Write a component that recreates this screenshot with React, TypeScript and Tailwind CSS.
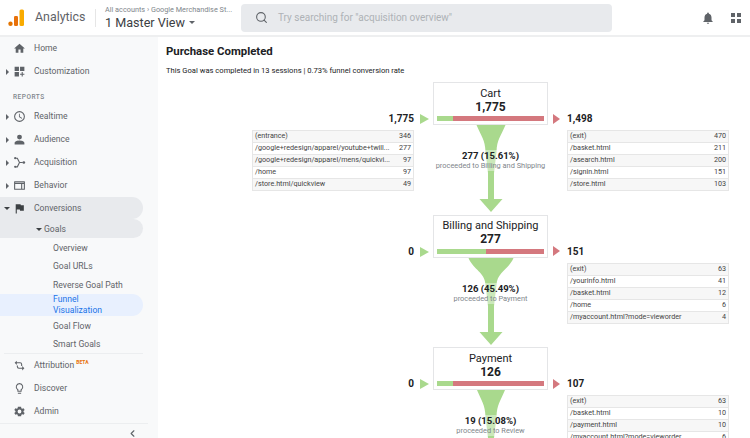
import React from "react";
import { Search, ChevronLeft } from "lucide-react";

const P = ({ d, fill = "#5f6368" }: { d: string; fill?: string }) => (
  <svg width="13" height="13" viewBox="0 0 24 24" fill={fill} className="shrink-0"><path d={d} /></svg>
);

const AcqIcon = () => (
  <svg width="13" height="13" viewBox="0 0 24 24" fill="none" stroke="#5f6368" strokeWidth="2" className="shrink-0">
    <path d="M5 4h3l4 8-4 8H5M12 12h6" />
    <circle cx="4" cy="4" r="2" fill="#5f6368" stroke="none" />
    <circle cx="4" cy="20" r="2" fill="#5f6368" stroke="none" />
    <circle cx="20" cy="12" r="2.5" fill="#5f6368" stroke="none" />
  </svg>
);

const icons: Record<string, string> = {
  home: "M10 20v-6h4v6h5v-8h3L12 3 2 12h3v8z",
  custom: "M3 3h8v8H3zM13 3h8v8h-8zM3 13h8v8H3zM16 13h2v3h3v2h-3v3h-2v-3h-3v-2h3z",
  clock: "M12 2a10 10 0 1 0 0 20 10 10 0 0 0 0-20zm0 18a8 8 0 1 1 0-16 8 8 0 0 1 0 16zm.5-13H11v6l5.2 3.2.8-1.3-4.5-2.7z",
  person: "M12 12a4.5 4.5 0 1 0 0-9 4.5 4.5 0 0 0 0 9zm0 2c-3 0-9 1.5-9 4.5V21h18v-2.5c0-3-6-4.5-9-4.5z",
  behavior: "M3 4h18a1 1 0 0 1 1 1v14a1 1 0 0 1-1 1H3a1 1 0 0 1-1-1V5a1 1 0 0 1 1-1zm1 5v9h11V9zm13 0v9h3V9zM4 6v1h16V6z",
  flag: "M5 4h9l.4 2H20v10h-7l-.4-2H7v7H5z",
  attribution: "M7 3 3 7l4 4V8h6a2 2 0 0 1 2 2v3h2v-3a4 4 0 0 0-4-4H7zM17 13l4 4-4 4v-3h-6a4 4 0 0 1-4-4v-2h2v2a2 2 0 0 0 2 2h6z",
  bulb: "M9 21.5h6V20H9zM12 2a7 7 0 0 0-4 12.7V17a1 1 0 0 0 1 1h6a1 1 0 0 0 1-1v-2.3A7 7 0 0 0 12 2zm2.5 11.5-.5.4V16h-4v-2.1l-.5-.4a5 5 0 1 1 5 0z",
  gear: "M19.4 13a7.5 7.5 0 0 0 0-2l2.1-1.6-2-3.5-2.5 1a7.5 7.5 0 0 0-1.7-1L15 3.3H9l-.4 2.6a7.5 7.5 0 0 0-1.7 1l-2.5-1-2 3.5L4.6 11a7.5 7.5 0 0 0 0 2l-2.2 1.6 2 3.5 2.5-1c.5.4 1.1.7 1.7 1l.4 2.6h6l.4-2.6c.6-.3 1.2-.6 1.7-1l2.5 1 2-3.5zM12 15.5a3.5 3.5 0 1 1 0-7 3.5 3.5 0 0 1 0 7z",
};

const Caret = ({ open = false }: { open?: boolean }) =>
  open ? (
    <span className="w-0 h-0 border-x-[3px] border-x-transparent border-t-[3px] border-t-[#3c4043]" />
  ) : (
    <span className="w-0 h-0 border-y-[3px] border-y-transparent border-l-[3px] border-l-[#5f6368]" />
  );

const NavItem = ({ icon, label, caret = true, open = false, active = false, extra }: { icon: string; label: string; caret?: boolean; open?: boolean; active?: boolean; extra?: React.ReactNode }) => (
  <div className={`shrink-0 flex items-center w-[143px] rounded-r-full ${active ? "h-[22px] bg-[#e8eaed]" : "h-[23px]"}`}>
    <span className="w-[14px] flex justify-center">{caret && <Caret open={open} />}</span>
    <span className="w-[11px] flex justify-center">
      {icon === "acq" ? <AcqIcon /> : <P d={icons[icon]} fill={active ? "#3c4043" : "#5f6368"} />}
    </span>
    <span className="ml-[9px] text-[8.6px] text-[#5f6368]">{label}</span>
    {extra}
  </div>
);

const SubItem = ({ label }: { label: string }) => (
  <div className="shrink-0 h-[18.5px] pt-[1.5px] flex items-center pl-[53px] text-[8.6px] text-[#5f6368]">{label}</div>
);

const Table = ({ rows }: { rows: [string, string][] }) => (
  <div className="border-t border-l border-r border-[#e6e6e6] text-[7.2px] text-[#444]">
    {rows.map(([a, b], i) => (
      <div key={i} className={`h-[12px] flex items-center justify-between gap-[8px] px-[2px] border-b border-[#e6e6e6] ${i % 2 === 0 ? "bg-[#f7f7f7]" : "bg-white"}`}>
        <span className="whitespace-nowrap">{a}</span>
        <span>{b}</span>
      </div>
    ))}
  </div>
);

type StepProps = {
  name: string;
  value: string;
  enter: string;
  exit: string;
  green: number;
  left?: [string, string][];
  right: [string, string][];
  pct: string;
  next: string;
  topW: number;
  stemW: number;
};

const Funnel = ({ topW, stemW }: { topW: number; stemW: number }) => {
  const c = 58;
  const l = c - topW / 2;
  const r = c + topW / 2;
  const sl = c - stemW / 2;
  const sr = c + stemW / 2;
  const d = `M${l} 0H${r}C${r - 5} 12 ${sr + 3} 14 ${sr + 2.5} 27L${sr} 48V74H${c + 11.5}L${c} 87L${c - 11.5} 74H${sl}V48L${sl - 2.5} 27C${sl - 3} 14 ${l + 5} 12 ${l} 0Z`;
  return (
    <svg width="115" height="89" viewBox="0 0 115 89" className="block">
      <path d={d} fill="#a9d98d" />
    </svg>
  );
};

const Step = ({ name, value, enter, exit, green, left, right, pct, next, topW, stemW }: StepProps) => (
  <div className="grid grid-cols-[162px_19px_115px_19px_162px] h-[132.5px] text-[#202124]">
    <div>
      <div className="h-[44px] flex items-end justify-end text-[10px] leading-[14px] font-bold">{enter}</div>
      <div className="mt-[4px]">{left && <Table rows={left} />}</div>
    </div>
    <div className="h-[43px] flex items-end pb-[1px] pl-[6px]">
      <span className="w-0 h-0 border-y-[5.5px] border-y-transparent border-l-[9px] border-l-[#a9d98d]" />
    </div>
    <div>
      <div className="h-[43px] border border-[#e4e5e7] flex flex-col items-center pt-[3.5px] bg-white">
        <div className="text-[11px] leading-[14px]">{name}</div>
        <div className="text-[12px] leading-[13px] font-bold">{value}</div>
        <div className="mt-auto mb-[3px] w-[107px] h-[5px] flex">
          <div className="h-full bg-[#a9d98d]" style={{ width: green }} />
          <div className="h-full flex-1 bg-[#d4787e]" />
        </div>
      </div>
      <div className="relative">
        <Funnel topW={topW} stemW={stemW} />
        <div className="absolute top-[25px] left-0 w-[115px] text-center bg-white/40 whitespace-nowrap">
          <div className="text-[9.5px] leading-[11px] font-bold">{pct}</div>
          <div className="text-[7.4px] leading-[10px] text-[#80868b]">proceeded to {next}</div>
        </div>
      </div>
    </div>
    <div className="h-[43px] flex items-end pb-[1.5px] pl-[5px]">
      <span className="w-0 h-0 border-y-[5px] border-y-transparent border-l-[7.5px] border-l-[#d4787e]" />
    </div>
    <div>
      <div className="h-[44px] flex items-end text-[10px] leading-[14px] font-bold">{exit}</div>
      <div className="mt-[4px]"><Table rows={right} /></div>
    </div>
  </div>
);

export default function App() {
  return (
    <div className="h-[438px] w-[750px] overflow-hidden flex flex-col bg-white" style={{ fontFamily: "Roboto, sans-serif" }}>
      <header className="h-[37px] shrink-0 flex items-center border-b-2 border-[#eeeff0]">
        <svg width="16" height="18" viewBox="0 0 16 18" className="ml-[8px] shrink-0">
          <circle cx="2.5" cy="14.8" r="2.2" fill="#e37400" />
          <rect x="6" y="7" width="4" height="10" rx="1.2" fill="#e8710a" />
          <rect x="11.5" y="0.5" width="4.5" height="16.5" rx="1.5" fill="#f9ab00" />
        </svg>
        <span className="ml-[11px] w-[50px] text-[12.4px] text-[#5f6368] whitespace-nowrap">Analytics</span>
        <span className="ml-[10px] w-px h-[18px] bg-[#e6e6e6]" />
        <div className="ml-[9px] w-[127px] shrink-0 flex flex-col">
          <div className="text-[7.3px] leading-[10px] text-[#80868b] whitespace-nowrap">All accounts › Google Merchandise St...</div>
          <div className="text-[12.6px] leading-[15px] text-[#3c4043] flex items-center gap-[4px]">
            1 Master View
            <span className="w-0 h-0 border-x-[3px] border-x-transparent border-t-[3px] border-t-[#5f6368]" />
          </div>
        </div>
        <div className="ml-[9px] w-[371px] h-[28px] rounded-[4px] bg-[#e8eaed] flex items-center pl-[14px] shrink-0">
          <Search size={13} color="#5f6368" strokeWidth={2} />
          <span className="ml-[10px] text-[10px] text-[#aeb2b6]">Try searching for "acquisition overview"</span>
        </div>
        <svg width="14" height="14" viewBox="0 0 24 24" fill="#5f6368" className="ml-[89px]">
          <path d="M12 22c1.1 0 2-.9 2-2h-4c0 1.1.9 2 2 2zm6-6v-5c0-3.07-1.63-5.64-4.5-6.32V4c0-.83-.67-1.5-1.5-1.5s-1.5.67-1.5 1.5v.68C7.64 5.36 6 7.92 6 11v5l-2 2v1h16v-1z" />
        </svg>
        <svg width="10" height="10" viewBox="0 0 10 10" className="ml-[16px]" fill="#5f6368">
          <rect width="4" height="4" x="0" y="0" />
          <rect width="4" height="4" x="6" y="0" />
          <rect width="4" height="4" x="0" y="6" />
          <rect width="4" height="4" x="6" y="6" />
        </svg>
      </header>
      <div className="flex flex-1 min-h-0">
        <aside className="w-[158px] shrink-0 bg-[#f8f9fa] flex flex-col overflow-hidden">
          <NavItem icon="home" label="Home" caret={false} />
          <NavItem icon="custom" label="Customization" />
          <div className="shrink-0 h-[22px] pl-[13px] pt-[9px] text-[6.5px] leading-[10px] tracking-[0.5px] text-[#80868b] font-medium">REPORTS</div>
          <NavItem icon="clock" label="Realtime" />
          <NavItem icon="person" label="Audience" />
          <NavItem icon="acq" label="Acquisition" />
          <NavItem icon="behavior" label="Behavior" />
          <NavItem icon="flag" label="Conversions" open active />
          <div className="shrink-0 h-[19px] pt-[2px] w-[143px] bg-[#e8eaed] rounded-r-full flex items-center pl-[36px] gap-[2px] text-[8.6px] text-[#5f6368]">
            <Caret open />Goals
          </div>
          <SubItem label="Overview" />
          <SubItem label="Goal URLs" />
          <SubItem label="Reverse Goal Path" />
          <div className="shrink-0 h-[22.5px] w-[143px] bg-[#e8f0fe] rounded-r-full flex items-center pl-[53px] text-[8.6px] leading-[11px] text-[#1a73e8]">Funnel<br />Visualization</div>
          <SubItem label="Goal Flow" />
          <SubItem label="Smart Goals" />
          <div className="shrink-0 ml-[4px] w-[139px] border-t border-[#eceef0]" />
          <NavItem icon="attribution" label="Attribution" caret={false} extra={<span className="text-[5px] leading-[6px] font-bold text-[#e8710a] self-start mt-[5px] ml-[2px]">BETA</span>} />
          <NavItem icon="bulb" label="Discover" caret={false} />
          <NavItem icon="gear" label="Admin" caret={false} />
          <div className="shrink-0 w-[148px] border-t border-[#eceef0]" />
          <div className="shrink-0 w-[138px] flex justify-end pt-[4px]"><ChevronLeft size={11} color="#5f6368" strokeWidth={2.5} /></div>
        </aside>
        <main className="flex-1 min-w-0 overflow-hidden pl-[8px]">
          <h1 className="mt-[7px] text-[11.4px] leading-[14px] font-bold text-[#202124]">Purchase Completed</h1>
          <p className="mt-[8px] text-[7.6px] leading-[10px] text-[#202124]">This Goal was completed in 13 sessions | 0.73% funnel conversion rate</p>
          <div className="ml-[86px] mt-[6px]">
            <Step
              name="Cart" value="1,775" enter="1,775" exit="1,498" green={16} topW={29} stemW={6}
              pct="277 (15.61%)" next="Billing and Shipping"
              left={[["(entrance)", "346"], ["/google+redesign/apparel/youtube+twill...", "277"], ["/google+redesign/apparel/mens/quickvi...", "97"], ["/home", "97"], ["/store.html/quickview", "49"]]}
              right={[["(exit)", "470"], ["/basket.html", "211"], ["/asearch.html", "200"], ["/signin.html", "151"], ["/store.html", "103"]]}
            />
            <Step
              name="Billing and Shipping" value="277" enter="0" exit="151" green={49} topW={45} stemW={6}
              pct="126 (45.49%)" next="Payment"
              right={[["(exit)", "63"], ["/yourinfo.html", "41"], ["/basket.html", "12"], ["/home", "6"], ["/myaccount.html?mode=vieworder", "4"]]}
            />
            <Step
              name="Payment" value="126" enter="0" exit="107" green={16} topW={28} stemW={6}
              pct="19 (15.08%)" next="Review"
              right={[["(exit)", "63"], ["/basket.html", "10"], ["/payment.html", "10"], ["/myaccount.html?mode=vieworder", "6"], ["/home", "4"]]}
            />
          </div>
        </main>
      </div>
    </div>
  );
}
